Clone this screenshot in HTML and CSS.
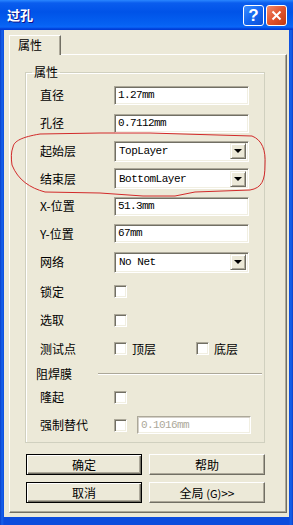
FILE: index.html
```html
<!DOCTYPE html>
<html lang="zh-CN">
<head>
  <meta charset="utf-8">
  <title>过孔</title>
  <link rel="stylesheet" href="styles.css">
</head>
<body>
  <div class="window">
    <div class="titlebar">
      <span class="title">过孔</span>
      <span class="title-btn title-help">?</span>
      <span class="title-btn title-close">
        <svg width="11" height="11" viewBox="0 0 11 11"><path d="M1.5 1.5 L9.5 9.5 M9.5 1.5 L1.5 9.5" stroke="#fff" stroke-width="2" fill="none"/></svg>
      </span>
    </div>
    <div class="client">
      <div class="tabs"><span class="tab">属性</span></div>
      <div class="panel">
        <fieldset class="group">
          <legend class="group-title">属性</legend>
          <div class="row"><span class="label">直径</span><span class="edit">1.27mm</span></div>
          <div class="row"><span class="label">孔径</span><span class="edit">0.7112mm</span></div>
          <div class="row"><span class="label">起始层</span><span class="combo"><span class="combo-text">TopLayer</span><span class="combo-btn"></span></span></div>
          <div class="row row-27"><span class="label">结束层</span><span class="combo"><span class="combo-text">BottomLayer</span><span class="combo-btn"></span></span></div>
          <div class="row"><span class="label">X-位置</span><span class="edit">51.3mm</span></div>
          <div class="row row-27"><span class="label">Y-位置</span><span class="edit">67mm</span></div>
          <div class="row row-30"><span class="label">网络</span><span class="combo combo-net"><span class="combo-text">No Net</span><span class="combo-btn"></span></span></div>
          <div class="row row-29"><span class="label">锁定</span><span class="check"></span></div>
          <div class="row"><span class="label">选取</span><span class="check"></span></div>
          <div class="row row-29">
            <span class="label">测试点</span>
            <span class="check"></span><span class="check-text">顶层</span>
            <span class="check check-far"></span><span class="check-text">底层</span>
          </div>
          <div class="row row-21"><span class="sub-title">阻焊膜</span><span class="separator"></span></div>
          <div class="row row-26"><span class="label">隆起</span><span class="check"></span></div>
          <div class="row row-30"><span class="label">强制替代</span><span class="check"></span><span class="edit edit-disabled">0.1016mm</span></div>
        </fieldset>
        <div class="buttons">
          <button class="button button-default" type="button">确定</button>
          <button class="button" type="button">帮助</button>
          <button class="button button-default" type="button">取消</button>
          <button class="button" type="button">全局 <span class="accel">(G)</span>&gt;&gt;</button>
        </div>
      </div>
    </div>
  </div>

  <svg class="mark" width="293" height="525" viewBox="0 0 293 525">
    <path d="M13 147 C14 141 22 137 40 134 L100 133 L150 133 L183 134 L252 136 C262 140 266 150 265 165 C265 180 262 188 250 190 L195 192 L175 196 L143 196 L100 193 L45 192 C30 188 18 180 12 165 C11 158 11 152 13 147 Z" fill="none" stroke="#D22A2A" stroke-width="1"/>
  </svg>
</body>
</html>
```

FILE: styles.css
```css
*, *::before, *::after {
  margin: 0;
  padding: 0;
  box-sizing: border-box;
}

body {
  position: relative;
  width: 293px;
  height: 525px;
  overflow: hidden;
  background-color: #0842D4;
  color: #000000;
  font-size: 12px;
  font-family: "Noto Sans CJK SC", sans-serif;
}

.window {
  display: flex;
  flex-direction: column;
  height: 525px;
  background: linear-gradient(to right, #0A3FC8 0, #1662EC 2px, #0B4CDD 4px, #0B4CDD 289px, #1662EC 291px, #0A3FC8 293px);
}

.titlebar {
  display: flex;
  align-items: center;
  height: 30px;
  padding: 0 6px 0 7px;
  background: linear-gradient(to bottom, #2A87FF 0, #0A5DEE 3px, #0053E8 12px, #0561F2 24px, #0A66F8 27px, #003DD7 29px, #003DD7 30px);
}

.title {
  flex: 1;
  color: #FFFFFF;
  font-size: 13px;
  font-weight: 700;
  text-shadow: 1px 1px #0F1089;
  line-height: 16px;
}

.title-btn {
  display: flex;
  align-items: center;
  justify-content: center;
  width: 21px;
  height: 21px;
  border: 1px solid #FFFFFF;
  border-radius: 3px;
  color: #FFFFFF;
}

.title-help {
  margin-right: 2px;
  background: linear-gradient(135deg, #3C8EFF 0%, #1466F0 50%, #0C4FD8 100%);
  font-family: "Liberation Sans", sans-serif;
  font-size: 17px;
  font-weight: 700;
  line-height: 1;
}

.title-close {
  background: linear-gradient(135deg, #F08A6C 0%, #E1542E 50%, #C23A12 100%);
}

.client {
  flex: 1;
  display: flex;
  flex-direction: column;
  margin: 0 4px 8px 4px;
  padding: 5px 2px 4px 5px;
  background-color: #ECE9D8;
}

.tabs {
  display: flex;
  position: relative;
  z-index: 1;
  margin-bottom: -1px;
}

.tab {
  width: 52px;
  height: 20px;
  padding-left: 8px;
  border-top: 1px solid #FFFFFF;
  border-left: 1px solid #FFFFFF;
  border-right: 1px solid #716F64;
  box-shadow: inset -1px 0 #ACA899;
  background-color: #ECE9D8;
  line-height: 18px;
}

.panel {
  flex: 1;
  border-top: 1px solid #FFFFFF;
  border-left: 1px solid #FFFFFF;
  border-right: 1px solid #716F64;
  border-bottom: 1px solid #716F64;
  box-shadow: inset -1px -1px #ACA899;
}

.group {
  width: 240px;
  height: 379px;
  margin: 9px 0 0 15px;
  padding: 1px 0 0 14px;
  border: 1px solid #D0D0BF;
  box-shadow: inset 1px 1px #FFFFFF;
}

.group-title {
  margin-left: -8px;
  padding: 0 2px;
  line-height: 16px;
}

.row {
  display: flex;
  align-items: center;
  height: 28px;
}

.row-21 { height: 21px; }
.row-26 { height: 26px; }
.row-27 { height: 27px; }
.row-29 { height: 29px; }
.row-30 { height: 30px; }

.label {
  width: 74px;
  line-height: 14px;
}

.edit, .combo, .check {
  background-color: #FFFFFF;
  border: 1px solid;
  border-color: #ACA899 #FFFFFF #FFFFFF #ACA899;
  box-shadow: inset 1px 1px #716F64, inset -1px -1px #F1EFE2;
}

.edit {
  width: 135px;
  height: 19px;
  padding-left: 3px;
  font-family: "Liberation Mono", monospace;
  font-size: 11px;
  letter-spacing: -0.6px;
  line-height: 17px;
}

.edit-disabled {
  width: 114px;
  height: 18px;
  margin-left: 10px;
  color: #ACA899;
  box-shadow: inset 1px 1px #D4D0C8, inset -1px -1px #F1EFE2;
}

.combo {
  display: flex;
  align-items: center;
  justify-content: space-between;
  width: 135px;
  height: 21px;
  padding: 0 2px 0 4px;
  font-family: "Liberation Mono", monospace;
  font-size: 11px;
  letter-spacing: -0.5px;
}

.combo-btn {
  position: relative;
  width: 16px;
  height: 16px;
  background-color: #ECE9D8;
  border: 1px solid;
  border-color: #F1EFE2 #716F64 #716F64 #F1EFE2;
  box-shadow: inset 1px 1px #FFFFFF, inset -1px -1px #ACA899;
}

.combo-btn::after {
  content: '';
  position: absolute;
  left: 3px;
  top: 5px;
  border-left: 4px solid transparent;
  border-right: 4px solid transparent;
  border-top: 4px solid #000000;
}

.check {
  width: 13px;
  height: 13px;
}

.check-far {
  margin-left: 40px;
}

.check-text {
  margin-left: 5px;
  line-height: 14px;
}

.sub-title {
  margin-left: -4px;
  width: 62px;
  line-height: 14px;
}

.separator {
  width: 164px;
  height: 2px;
  border-top: 1px solid #ACA899;
  border-bottom: 1px solid #FFFFFF;
}

.buttons {
  display: grid;
  grid-template-columns: 116px 116px;
  gap: 7px;
  margin: 11px 0 0 16px;
}

.button {
  height: 21px;
  border: 1px solid;
  border-color: #FFFFFF #716F64 #716F64 #FFFFFF;
  box-shadow: inset -1px -1px #ACA899;
  background-color: #ECE9D8;
  color: #000000;
  font-family: inherit;
  font-size: 12px;
  line-height: 17px;
}

.button-default {
  border: 1px solid #000000;
  box-shadow: inset 1px 1px #FFFFFF, inset -1px -1px #716F64, inset -2px -2px #ACA899;
}

.accel {
  font-size: 11px;
}

.mark {
  position: absolute;
  top: 0;
  left: 0;
  pointer-events: none;
}
```
